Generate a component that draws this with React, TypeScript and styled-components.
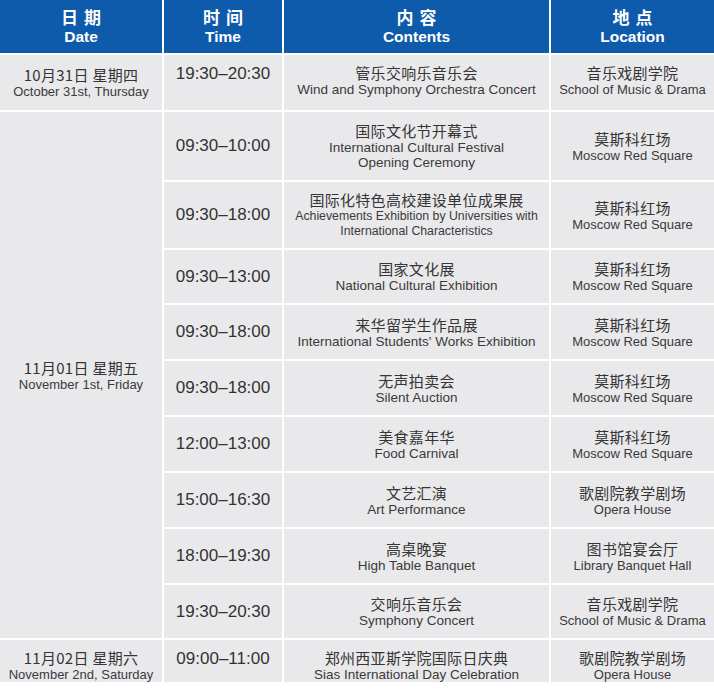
import styled, { createGlobalStyle } from "styled-components";

const GlobalStyle = createGlobalStyle`
    html, body {
        margin: 0;
        padding: 0;
        background: #ffffff;
    }
    body {
        font-family: "Liberation Sans", Arial, "Noto Sans CJK SC", sans-serif;
    }
`

const Frame = styled.div`
    width: 714px;
    height: 682px;
    overflow: hidden;
`

const Table = styled.div`
    display: grid;
    grid-template-columns: 162px 118px 265px 163px;
    grid-template-rows: 53px 55px 68px 66px 53px 54px 54px 54px 54px 54px 53px 54px;
    column-gap: 2px;
    row-gap: 2px;
    background: #ffffff;
`

const HeadCell = styled.div`
    background: #0e5aab;
    color: #ffffff;
    display: flex;
    flex-direction: column;
    align-items: center;
    justify-content: center;
    gap: 1px;
    font-weight: bold;
    padding-bottom: 1px;
`

const HeadZh = styled.div`
    font-family: "Noto Sans CJK SC", sans-serif;
    font-size: 17px;
    line-height: 20px;
    letter-spacing: 6px;
    margin-right: -6px;
`

const HeadEn = styled.div`
    font-size: 15.5px;
    line-height: 18px;
`

const Cell = styled.div<{ $span?: number; $top?: boolean }>`
    background: #e9e9eb;
    display: flex;
    flex-direction: column;
    align-items: center;
    justify-content: ${(p) => (p.$top ? "flex-start" : "center")};
    padding-top: ${(p) => (p.$top ? "9px" : "0")};
    text-align: center;
    white-space: nowrap;
    grid-row: ${(p) => (p.$span ? `span ${p.$span}` : "auto")};
`

const Zh = styled.div`
    font-family: "Noto Sans CJK SC", sans-serif;
    font-size: 15px;
    line-height: 18px;
    letter-spacing: 0.3px;
    color: #353535;
`

const En = styled.div<{ $size?: number }>`
    font-size: ${(p) => p.$size ?? 13}px;
    line-height: 15px;
    color: #3a3a3a;
`

const Time = styled.div`
    font-size: 17px;
    line-height: 20px;
    color: #333333;
`

type Event = {
    time: string;
    zh: string;
    en: string[];
    placeZh: string;
    placeEn: string;
    top?: boolean;
    small?: boolean;
};

const DateBlock = ({ zh, en, span, top }: { zh: string; en: string; span: number; top?: boolean }) => (
    <Cell $span={span} $top={top}>
        <Zh>{zh}</Zh>
        <En>{en}</En>
    </Cell>
)

const EventRow = ({ ev }: { ev: Event }) => (
    <>
        <Cell $top={ev.top}>
            <Time>{ev.time}</Time>
        </Cell>
        <Cell $top={ev.top}>
            <Zh>{ev.zh}</Zh>
            {ev.en.map((line) => (
                <En $size={ev.small ? 12.3 : 13.5} key={line}>{line}</En>
            ))}
        </Cell>
        <Cell $top={ev.top}>
            <Zh>{ev.placeZh}</Zh>
            <En>{ev.placeEn}</En>
        </Cell>
    </>
)

const redSquare = { placeZh: "莫斯科红场", placeEn: "Moscow Red Square" }

const oct31: Event = {
    time: "19:30–20:30",
    zh: "管乐交响乐音乐会",
    en: ["Wind and Symphony Orchestra Concert"],
    placeZh: "音乐戏剧学院",
    placeEn: "School of Music & Drama",
    top: true,
}

const nov1: Event[] = [
    { time: "09:30–10:00", zh: "国际文化节开幕式", en: ["International  Cultural Festival", "Opening Ceremony"], ...redSquare },
    { time: "09:30–18:00", zh: "国际化特色高校建设单位成果展", en: ["Achievements Exhibition by Universities with", "International Characteristics"], small: true, ...redSquare },
    { time: "09:30–13:00", zh: "国家文化展", en: ["National Cultural Exhibition"], ...redSquare },
    { time: "09:30–18:00", zh: "来华留学生作品展", en: ["International Students' Works Exhibition"], ...redSquare },
    { time: "09:30–18:00", zh: "无声拍卖会", en: ["Silent Auction"], ...redSquare },
    { time: "12:00–13:00", zh: "美食嘉年华", en: ["Food Carnival"], ...redSquare },
    { time: "15:00–16:30", zh: "文艺汇演", en: ["Art Performance"], placeZh: "歌剧院教学剧场", placeEn: "Opera House" },
    { time: "18:00–19:30", zh: "高桌晚宴", en: ["High Table Banquet"], placeZh: "图书馆宴会厅", placeEn: "Library Banquet Hall" },
    { time: "19:30–20:30", zh: "交响乐音乐会", en: ["Symphony Concert"], placeZh: "音乐戏剧学院", placeEn: "School of Music & Drama" },
]

const nov2: Event = {
    time: "09:00–11:00",
    zh: "郑州西亚斯学院国际日庆典",
    en: ["Sias International Day Celebration"],
    placeZh: "歌剧院教学剧场",
    placeEn: "Opera House",
    top: true,
}

const headers = [
    { zh: "日期", en: "Date" },
    { zh: "时间", en: "Time" },
    { zh: "内容", en: "Contents" },
    { zh: "地点", en: "Location" },
]

const App = () => {
    return (
        <>
            <GlobalStyle />
            <Frame>
                <Table>
                    {headers.map((h) => (
                        <HeadCell key={h.en}>
                            <HeadZh>{h.zh}</HeadZh>
                            <HeadEn>{h.en}</HeadEn>
                        </HeadCell>
                    ))}

                    <DateBlock zh="10月31日 星期四" en="October 31st, Thursday" span={1} />
                    <EventRow ev={oct31} />

                    <DateBlock zh="11月01日 星期五" en="November 1st, Friday" span={nov1.length} />
                    {nov1.map((ev, i) => (
                        <EventRow ev={ev} key={i} />
                    ))}

                    <DateBlock zh="11月02日 星期六" en="November 2nd, Saturday" span={1} top />
                    <EventRow ev={nov2} />
                </Table>
            </Frame>
        </>
    )
}

export default App;
